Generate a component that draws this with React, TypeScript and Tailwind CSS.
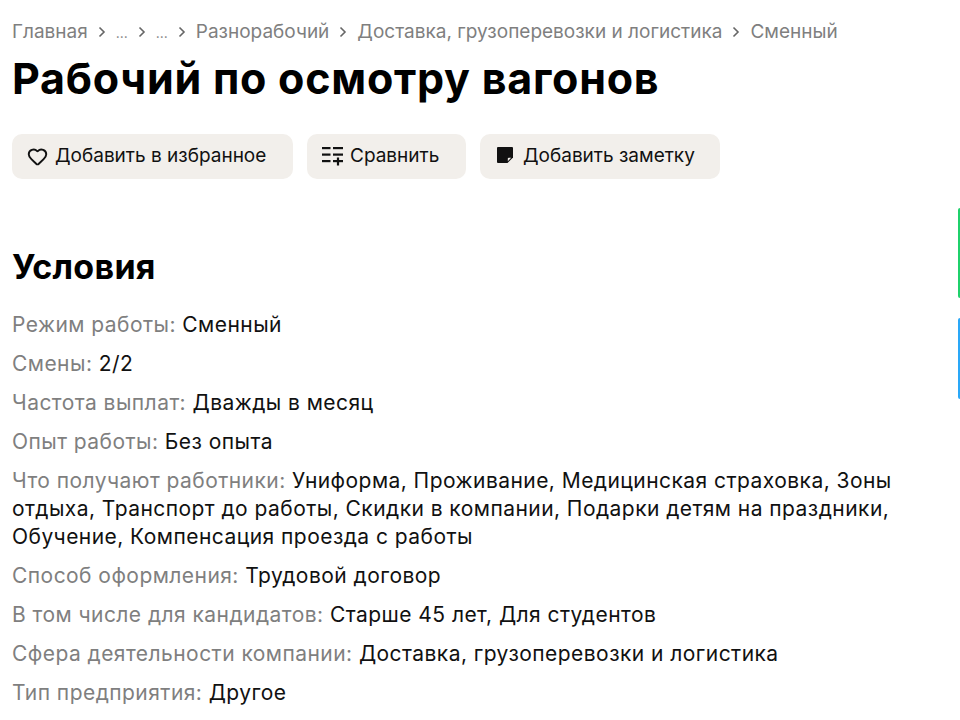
import { Heart } from "lucide-react";

const rows: [string, string][] = [
  ["Режим работы:", "Сменный"],
  ["Смены:", "2/2"],
  ["Частота выплат:", "Дважды в месяц"],
  ["Опыт работы:", "Без опыта"],
  ["Что получают работники:", "Униформа, Проживание, Медицинская страховка, Зоны отдыха, Транспорт до работы, Скидки в компании, Подарки детям на праздники, Обучение, Компенсация проезда с работы"],
  ["Способ оформления:", "Трудовой договор"],
  ["В том числе для кандидатов:", "Старше 45 лет, Для студентов"],
  ["Сфера деятельности компании:", "Доставка, грузоперевозки и логистика"],
  ["Тип предприятия:", "Другое"],
];

const crumbs = ["Главная", "...", "...", "Разнорабочий", "Доставка, грузоперевозки и логистика", "Сменный"];

function Chevron() {
  return (
    <svg width="8" height="12" viewBox="0 0 8 12" fill="none" stroke="#666" strokeWidth="1.6" className="mx-[10px] shrink-0">
      <path d="M1.5 1.5 6 6l-4.5 4.5" />
    </svg>
  );
}

function CompareIcon() {
  return (
    <svg width="21" height="20" viewBox="0 0 21 20" fill="#111" className="-mt-[1px]">
      <rect x="0" y="1" width="8.5" height="2.2" />
      <rect x="11" y="1" width="10" height="2.2" />
      <rect x="0" y="7.5" width="8.5" height="2.2" />
      <rect x="11" y="7.5" width="10" height="2.2" />
      <rect x="0" y="14" width="8.5" height="2.2" />
      <rect x="11" y="14" width="10" height="2.2" />
      <rect x="14.9" y="11.5" width="2.2" height="8" />
    </svg>
  );
}

function NoteIcon() {
  return (
    <svg width="16" height="16" viewBox="0 0 16 16" fill="#111" className="-mt-[3px]">
      <path d="M1 0h14a1 1 0 0 1 1 1v9.5L10.5 16H1a1 1 0 0 1-1-1V1a1 1 0 0 1 1-1Z" />
      <path d="M10.8 14.2 14.2 10.8h-2.4a1 1 0 0 0-1 1Z" fill="#f2efeb" />
    </svg>
  );
}

export default function App() {
  return (
    <div className="relative h-[720px] w-[960px] overflow-hidden bg-white pl-[12px] font-['Inter','Noto_Sans',sans-serif] text-[#111]">
      {/* Хлебные крошки */}
      <div className="flex h-[62px] items-center pt-[2px] text-[19px] text-[#7f7f7f]">
        {crumbs.map((c, i) => (
          <span key={i} className="flex items-center">
            {i > 0 && <Chevron />}
            <span className={c === "..." ? "w-[12px] text-[14px]" : ""}>{c}</span>
          </span>
        ))}
      </div>

      <h1 className="text-[43px] leading-[32px] font-bold tracking-[0.75px] text-black">Рабочий по осмотру вагонов</h1>

      <div className="mt-[40px] flex gap-[14px] text-[19px]">
        <button className="flex h-[45px] w-[281px] items-center gap-[7px] rounded-[10px] bg-[#f2efeb] pl-[15px]">
          <Heart size={21} strokeWidth={2.2} className="-mt-[1px]" />
          Добавить в избранное
        </button>
        <button className="flex h-[45px] w-[159px] items-center gap-[7px] rounded-[10px] bg-[#f2efeb] pl-[15px]">
          <CompareIcon />
          Сравнить
        </button>
        <button className="flex h-[45px] w-[240px] items-center gap-[10px] rounded-[10px] bg-[#f2efeb] pl-[17px]">
          <NoteIcon />
          Добавить заметку
        </button>
      </div>

      <h2 className="mt-[66px] text-[34px] leading-[44px] font-bold tracking-[0.3px] text-black">Условия</h2>

      <div className="mt-[22px] flex w-[900px] flex-col gap-[11px] text-[21px] leading-[28px] tracking-[0.45px]">
        {rows.map(([label, value]) => (
          <div key={label}>
            <span className="text-[#7f7f7f]">{label}</span> {value}
          </div>
        ))}
      </div>

      {/* Края соседних карточек справа */}
      <div className="absolute left-[958px] top-[208px] h-[90px] w-[2px] rounded-l bg-[#1fd16b]" />
      <div className="absolute left-[958px] top-[318px] h-[81px] w-[2px] rounded-l bg-[#2aa8f8]" />
    </div>
  );
}
